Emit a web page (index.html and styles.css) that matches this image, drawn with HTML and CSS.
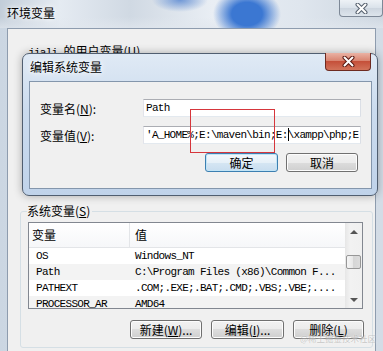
FILE: index.html
```html
<!DOCTYPE html>
<html lang="zh-CN">

<head>
    <meta charset="UTF-8">
    <meta name="viewport" content="width=device-width, initial-scale=1.0">
    <title>环境变量</title>
    <link rel="stylesheet" href="styles.css">
</head>

<body>

    <div class="window">
        <div class="titlebar">
            <span class="title">环境变量</span>
            <button class="close">
                <svg width="13" height="11" viewBox="0 0 13 11">
                    <path d="M2.5 1.5 L10.5 9.5 M10.5 1.5 L2.5 9.5" stroke="#55606e" stroke-width="4" stroke-linecap="round" />
                    <path d="M2.5 1.5 L10.5 9.5 M10.5 1.5 L2.5 9.5" stroke="#fff" stroke-width="2" stroke-linecap="round" />
                </svg>
            </button>
        </div>

        <div class="frame">
            <div class="client">

                <div class="user-vars">
                    <p class="user-label"><span class="mono">jiali </span>的用户变量(<u>U</u>)</p>
                </div>

                <fieldset class="group">
                    <legend>系统变量(<u>S</u>)</legend>

                    <div class="list">
                        <div class="list-body">
                            <div class="row head">
                                <span class="col-name">变量</span>
                                <span class="col-value">值</span>
                            </div>
                            <div class="row">
                                <span class="col-name">OS</span>
                                <span class="col-value">Windows_NT</span>
                            </div>
                            <div class="row odd">
                                <span class="col-name">Path</span>
                                <span class="col-value">C:\Program Files (x86)\Common F...</span>
                            </div>
                            <div class="row">
                                <span class="col-name">PATHEXT</span>
                                <span class="col-value">.COM;.EXE;.BAT;.CMD;.VBS;.VBE;....</span>
                            </div>
                            <div class="row odd">
                                <span class="col-name">PROCESSOR_AR</span>
                                <span class="col-value">AMD64</span>
                            </div>
                        </div>
                        <div class="scrollbar">
                            <span class="arrow"><i class="tri up"></i></span>
                            <span class="track-top"></span>
                            <span class="thumb"></span>
                            <span class="track-rest"></span>
                            <span class="arrow"><i class="tri down"></i></span>
                        </div>
                    </div>

                    <div class="actions">
                        <button class="btn w72">新建(<u>W</u>)...</button>
                        <button class="btn w73">编辑(<u>I</u>)...</button>
                        <button class="btn w71">删除(<u>L</u>)</button>
                    </div>
                </fieldset>

            </div>
        </div>
    </div>

    <section class="dialog">
        <div class="dialog-titlebar">
            <span class="dialog-title">编辑系统变量</span>
            <button class="close red">
                <svg width="13" height="11" viewBox="0 0 13 11">
                    <path d="M2.5 1.5 L10.5 9.5 M10.5 1.5 L2.5 9.5" stroke="#5a1a12" stroke-width="4" stroke-linecap="round" />
                    <path d="M2.5 1.5 L10.5 9.5 M10.5 1.5 L2.5 9.5" stroke="#fff" stroke-width="2" stroke-linecap="round" />
                </svg>
            </button>
        </div>

        <div class="dialog-client">
            <div class="field">
                <label>变量名(<u>N</u>):</label>
                <div class="input">Path</div>
            </div>
            <div class="field">
                <label>变量值(<u>V</u>):</label>
                <div class="input">'A_HOME%;E:\maven\bin;E:<span class="caret"></span>\xampp\php;E</div>
            </div>
            <div class="dialog-actions">
                <button class="btn default w73">确定</button>
                <button class="btn w72">取消</button>
            </div>
        </div>
    </section>

    <div class="mark"></div>
    <div class="watermark">@稀土掘金技术社区</div>

</body>

</html>
```

FILE: styles.css
```css
* {
    box-sizing: border-box;
}

body {
    margin: 0;
    width: 383px;
    height: 351px;
    overflow: hidden;
    position: relative;
    font-family: "Noto Sans CJK SC", sans-serif;
    font-size: 12px;
    color: #000;
    background: #d6dfe9;
}

p {
    margin: 0;
}

u {
    text-decoration: underline;
    text-underline-offset: 1px;
}

.mono,
.row .col-name,
.row .col-value,
.input {
    font-family: "Liberation Mono", monospace;
    font-size: 11px;
    letter-spacing: -0.7px;
}

/* outer window */

.window {
    height: 351px;
    display: flex;
    flex-direction: column;
}

.titlebar {
    height: 28px;
    flex: none;
    display: flex;
    justify-content: space-between;
    align-items: flex-start;
    background:
        radial-gradient(ellipse 28px 12px at 180px 0px, #6f97d6 0%, rgba(111, 151, 214, 0) 100%),
        radial-gradient(ellipse 34px 26px at 247px 14px, #3b77d2 45%, rgba(59, 119, 210, 0) 100%),
        linear-gradient(rgba(255, 255, 255, 0) 60%, rgba(225, 231, 238, .7)),
        linear-gradient(90deg, #c2cdd9 0, #e5ebf2 60px, #d0d9e3 130px, #e9eef4 212px, #dfe6ee 300px, #cdd6e0 383px);
}

.title {
    margin: 5px 0 0 7px;
    line-height: 16px;
    text-shadow: 0 0 4px #fff, 0 0 8px #fff;
}

.close {
    width: 44px;
    height: 17px;
    padding: 0;
    border: 1px solid #7d8897;
    border-top: 0;
    border-radius: 0 0 4px 4px;
    background: linear-gradient(#eef2f6, #dae2ea 50%, #ccd5df 50%, #dde4ec);
    display: flex;
    align-items: center;
    justify-content: center;
}

.frame {
    flex: 1;
    padding: 0 7px;
    background: linear-gradient(90deg, #cbd6e2, #dde4ec 50%, #d3dce6);
}

.client {
    height: 100%;
    border: 1px solid #8e9cae;
    border-bottom: 0;
    background: #f0f0f0;
}

.user-vars {
    height: 175px;
    padding: 14px 0 0 20px;
}

.user-label {
    line-height: 16px;
}

/* group box */

.group {
    margin: 0 2px 0 12px;
    padding: 4px 9px 8px 7px;
    border: 1px solid #d5dfe5;
    border-radius: 3px;
}

.group legend {
    padding: 0 2px 0 0;
    margin-left: -1px;
    line-height: 14px;
}

.list {
    height: 87px;
    border: 1px solid #828790;
    background: #fff;
    display: flex;
    overflow: hidden;
}

.list-body {
    flex: 1;
}

.row {
    display: flex;
    height: 16px;
    line-height: 16px;
    white-space: nowrap;
}

.row.odd {
    background: #f3f3f3;
}

.row .col-name {
    width: 101px;
    padding-left: 7px;
}

.row .col-value {
    padding-left: 5px;
}

.row.head {
    height: 25px;
    line-height: 24px;
    border-bottom: 1px solid #e3e5e8;
    background: linear-gradient(#fff, #f6f7f9);
}

.row.head .col-name,
.row.head .col-value {
    font-family: "Noto Sans CJK SC", sans-serif;
    font-size: 12px;
    letter-spacing: 0;
}

.row.head .col-name {
    width: 101px;
    padding-left: 3px;
    border-right: 1px solid #e3e5e8;
}

.scrollbar {
    width: 17px;
    display: flex;
    flex-direction: column;
    background: linear-gradient(90deg, #e6e6e6, #f2f2f2 30%, #f0f0f0);
}

.arrow {
    height: 17px;
    display: flex;
    align-items: center;
    justify-content: center;
}

.tri {
    width: 0;
    height: 0;
    border-left: 4px solid transparent;
    border-right: 4px solid transparent;
}

.tri.up {
    border-bottom: 4px solid #555;
}

.tri.down {
    border-top: 4px solid #555;
}

.track-top {
    height: 15px;
}

.thumb {
    height: 14px;
    margin: 0 1px;
    border: 1px solid #979797;
    border-radius: 2px;
    background: linear-gradient(90deg, #f5f5f5, #e6e6e6 50%, #d6d6d6 50%, #dcdcdc);
}

.track-rest {
    flex: 1;
}

.actions {
    display: flex;
    justify-content: flex-end;
    gap: 9px;
    margin-top: 11px;
    margin-right: -1px;
}

/* buttons */

.btn {
    height: 19px;
    padding: 0;
    border: 1px solid #707070;
    border-radius: 3px;
    background: linear-gradient(#f2f2f2 0%, #ebebeb 50%, #dddddd 50%, #cfcfcf 100%);
    box-shadow: inset 0 0 0 1px #fcfcfc;
    font-family: "Noto Sans CJK SC", sans-serif;
    font-size: 12px;
    line-height: 16px;
    color: #000;
}

.btn.default {
    border-color: #3c7fb1;
    background: linear-gradient(#f3f8fc 0%, #e6f0f8 50%, #d6e6f3 50%, #c8ddef 100%);
    box-shadow: inset 0 0 0 1px #c2e4f6;
}

.w71 {
    width: 71px;
}

.w72 {
    width: 72px;
}

.w73 {
    width: 73px;
}

/* edit dialog */

.dialog {
    position: absolute;
    left: 22px;
    top: 53px;
    width: 356px;
    height: 143px;
    padding: 0 5px 6px 6px;
    border: 1px solid #505e70;
    border-radius: 7px;
    background: linear-gradient(#e0eaf5, #cbdbee 40%, #c0d3ea);
    box-shadow: 0 0 8px rgba(0, 0, 0, .3);
    display: flex;
    flex-direction: column;
}

.dialog-titlebar {
    height: 27px;
    flex: none;
    display: flex;
    justify-content: space-between;
    align-items: flex-start;
}

.dialog-title {
    margin: 6px 0 0 1px;
    line-height: 14px;
    text-shadow: 0 0 4px #fff, 0 0 8px #fff;
}

.close.red {
    width: 46px;
    height: 18px;
    margin: -1px 1px 0 0;
    border-color: #6d2a20;
    background: linear-gradient(#eab2a4, #d98571 45%, #c5503a 50%, #d2735a);
}

.dialog-client {
    flex: 1;
    border: 1px solid #8496ac;
    background: #f0f0f0;
    padding: 17px 10px 0 10px;
}

.field {
    display: flex;
    align-items: center;
    height: 18px;
    margin-bottom: 9px;
}

.field label {
    width: 103px;
    flex: none;
}

.input {
    flex: 1;
    height: 18px;
    padding-left: 2px;
    border: 1px solid;
    border-color: #abadb3 #dbdfe6 #e3e9ef #e2e3ea;
    background: #fff;
    line-height: 16px;
    white-space: nowrap;
    overflow: hidden;
}

.caret {
    display: inline-block;
    width: 1px;
    height: 13px;
    margin-right: -1px;
    vertical-align: -3px;
    background: #000;
}

.dialog-actions {
    display: flex;
    justify-content: flex-end;
    gap: 8px;
    margin-top: 4px;
    margin-right: 3px;
}

/* annotation */

.mark {
    position: absolute;
    left: 190px;
    top: 109px;
    width: 85px;
    height: 44px;
    border: 1px solid #d6363c;
}

.watermark {
    position: absolute;
    left: 300px;
    top: 333px;
    font-size: 8.5px;
    line-height: 10px;
    color: rgba(140, 140, 140, .45);
    text-shadow: 0 0 2px rgba(255, 255, 255, .8);
    white-space: nowrap;
}
```
